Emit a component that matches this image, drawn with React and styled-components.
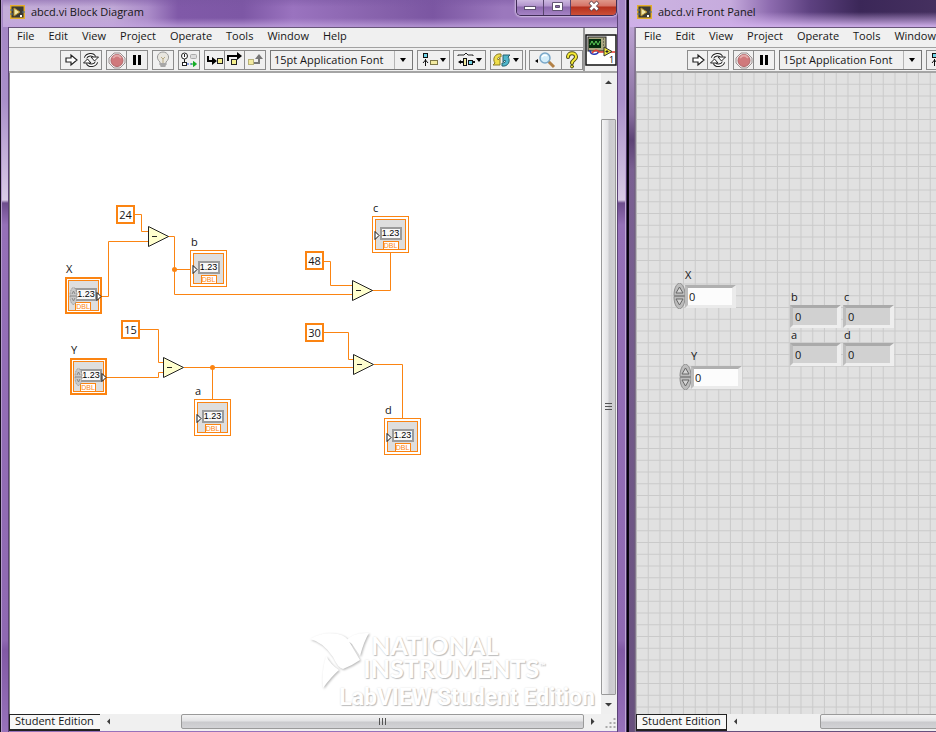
import React, { useId, useState } from "react";
import styled, { createGlobalStyle, css } from "styled-components";

const ORANGE = "#fb8412";

const GlobalStyle = createGlobalStyle`
  * { box-sizing: border-box; }
  body { margin: 0; overflow: hidden; }
  body, button, input, select {
    font-family: "Open Sans", "Noto Sans", sans-serif;
    font-size: 11px;
    color: #161616;
  }
  button { padding: 0; border: 0; background: none; }
`;

const Desktop = styled.main`
  display: grid;
  grid-template-columns: minmax(0, 628fr) minmax(0, 308fr);
  height: 100vh;
  min-height: 600px;
`;

const Frame = styled.section`
  display: grid;
  grid-template-rows: 27px minmax(0, 1fr);
  min-width: 0;
  min-height: 0;
  overflow: hidden;
  ${(p) =>
    p.$active
      ? css`
          padding: 0 10px 1px 9px;
          border-right: 1px solid #050208;
          background:
            linear-gradient(90deg, #140d1c 0 1px, #b39acb 1px 2px, transparent 2px 8px, #5b4276 8px 9px, transparent 9px calc(100% - 10px), #5b4276 calc(100% - 10px) calc(100% - 9px), transparent calc(100% - 9px) calc(100% - 2px), #c0a9d6 calc(100% - 2px) calc(100% - 1px), #4b3563 calc(100% - 1px)),
            linear-gradient(180deg, #a384c4 0, #a98fc9 100px, #d9cbe6 200px, #6d4d8c 203px, #9570b8 225px, #8f69b2 640px, #8159a5 650px, #9772bb 100%);
        `
      : css`
          padding: 0 0 1px 8px;
          background:
            linear-gradient(90deg, #0d0714 0 1px, transparent 1px 6px, #6e6079 7px, #9b90a6 8px, transparent 8px),
            linear-gradient(180deg, #cdb2e5 0, #a78fbd 60px, #856c9c 115px, #5d4375 140px, #7a6092 170px, #67507d 100%);
        `}
`;

const TitleBar = styled.header`
  display: flex;
  align-items: flex-start;
  gap: 6px;
  min-width: 0;
  margin-left: -6px;
  padding-left: 7px;
  background: ${(p) =>
    p.$active
      ? "linear-gradient(180deg, transparent 0 18px, rgba(194,163,222,.7) 26px), linear-gradient(180deg, rgba(120,85,160,.45), transparent 7px), linear-gradient(90deg, #c3acd8 0, #c0a8d6 110px, #ab8cc9 145px, #8059a8 175px, #7d57a5 240px, #9a73bf 290px, #8661ab 380px, #7b56a2 430px, #9b78bd 500px)"
      : "linear-gradient(180deg, transparent 0 12px, rgba(207,174,233,.95) 26px), linear-gradient(90deg, #cdb4e2 0, #c6abdd 100px, #8d6baf 140px, #5d4180 180px, #3b2758 230px, #45305f 100%)"};
`;

const Title = styled.h1`
  flex: 1;
  margin: 0;
  padding-top: 4px;
  font-size: 11px;
  font-weight: 400;
  line-height: 16px;
  white-space: nowrap;
`;

const AppMark = styled.svg`
  flex: none;
  width: 15px;
  height: 14px;
  margin-top: 5px;
`;

const CaptionButtons = styled.div`
  display: flex;
  height: 16px;
  border: 1px solid #3f2c55;
  border-top: 0;
  border-radius: 0 0 5px 5px;
  overflow: hidden;
  box-shadow: 0 0 2px 1px rgba(236, 224, 247, 0.7);
`;

const CaptionButton = styled.button`
  display: grid;
  place-items: center;
  width: ${(p) => (p.$close ? 45 : 27)}px;
  padding-bottom: 4px;
  border-right: ${(p) => (p.$close ? 0 : "1px solid #59456e")};
  background: ${(p) =>
    p.$close
      ? "linear-gradient(180deg, #df978a 0, #d57366 6px, #b5301d 7px, #cc4f38 100%)"
      : "linear-gradient(180deg, #cdb8e0 0, #b294cd 6px, #8d69ae 7px, #a583c5 100%)"};
  svg { width: 14px; height: 12px; }
`;

const Client = styled.div`
  display: grid;
  grid-template-rows: 46px minmax(0, 1fr) 17px;
  min-width: 0;
  min-height: 0;
  background: #f0f0f0;
`;

const Head = styled.div`
  display: flex;
  min-width: 0;
  border-top: 1px solid #685579;
  border-bottom: 2px solid #a5a5a5;
  overflow: hidden;
`;

const HeadBars = styled.div`
  flex: 1;
  min-width: 0;
  overflow: hidden;
`;

const MenuBar = styled.nav`
  display: flex;
  align-items: flex-start;
  gap: 14px;
  height: 20px;
  padding: 0 8px;
  border-bottom: 1px solid #a2a2a2;
`;

const MenuItem = styled.button`
  flex: none;
  height: 16px;
  line-height: 16px;
`;

const ToolBar = styled.div`
  display: flex;
  align-items: center;
  gap: 4px;
  height: 23px;
  padding-left: 51px;
  > * { flex: none; }
`;

const ToolGroup = styled.div`
  display: flex;
  border: 1px solid #8c8c8c;
`;

const ToolButton = styled.button`
  display: grid;
  place-items: center;
  width: ${(p) => (p.$wide ? 31 : 20)}px;
  height: 18px;
  &:not(:last-child) { border-right: 1px solid #8c8c8c; }
  svg { width: ${(p) => (p.$wide ? 29 : 18)}px; height: 18px; }
`;

const FontPicker = styled.label`
  display: flex;
  align-items: center;
  width: 143px;
  height: 20px;
  border: 1px solid #777;
  select {
    flex: 1;
    min-width: 0;
    height: 18px;
    padding: 0 0 1px 3px;
    border: 0;
    border-right: 1px solid #b5b5b5;
    margin-right: 5px;
    background: transparent;
    appearance: none;
  }
  svg { width: 6px; height: 4px; margin-right: 6px; }
`;

const Badge = styled.button`
  flex: none;
  display: grid;
  place-items: center;
  width: 34px;
  border-left: 2px solid #9a9a9a;
  svg { width: 32px; height: 32px; }
`;

const Body = styled.div`
  display: grid;
  grid-template-columns: minmax(0, 1fr) ${(p) => (p.$scroll ? "16px" : "")};
  min-height: 0;
`;

const Canvas = styled.div`
  position: relative;
  overflow: hidden;
  background: ${(p) => (p.$panel ? "#e1e1e1" : "#fff")};
  border-left: 1px solid ${(p) => (p.$panel ? "#b9b9b9" : "#888")};
`;

const Drawing = styled.svg`
  display: block;
  position: absolute;
  top: 0;
  left: 0;
  width: 100%;
  height: 100%;
`;

const Placed = styled.div`
  position: absolute;
  left: ${(p) => p.$x}px;
  top: ${(p) => p.$y}px;
`;

const NodeLabel = styled.span`
  display: block;
  height: 14px;
  padding-left: 1px;
  line-height: 12px;
`;

const Constant = styled.div`
  display: grid;
  place-items: center;
  width: 19px;
  height: 19px;
  border: 2px solid ${ORANGE};
  background: #fff;
  line-height: 14px;
`;

const TerminalBox = styled.div`
  position: relative;
  display: flex;
  flex-direction: column;
  align-items: center;
  width: 37px;
  height: 37px;
  padding: ${(p) => (p.$control ? 1 : 2)}px;
  border: ${(p) => (p.$control ? 2 : 1)}px solid ${ORANGE};
  background: #fff;
`;

const TerminalFace = styled.div`
  flex: 1;
  align-self: stretch;
  display: flex;
  flex-direction: column;
  align-items: ${(p) => (p.$control ? "flex-end" : "center")};
  justify-content: space-between;
  padding-top: 7px;
  padding-right: ${(p) => (p.$control ? 1 : 0)}px;
  border: 1px solid ${ORANGE};
  background: #dedede;
`;

const Readout = styled.span`
  display: flex;
  justify-content: center;
  width: 22px;
  height: 13px;
  border: 2px solid #9b9b9b;
  background: #f8f8f8;
  font: 9px/9px "Liberation Sans", sans-serif;
  color: #000;
`;

const TypeTag = styled.span`
  display: flex;
  justify-content: center;
  align-self: center;
  width: 16px;
  height: 8px;
  border: 1px solid ${ORANGE};
  border-bottom: 0;
  background: #fff;
  color: ${ORANGE};
  font: 7px/8px "Liberation Sans", sans-serif;
`;

const PortArrow = styled.svg`
  position: absolute;
  top: ${(p) => (p.$control ? 12 : 13)}px;
  left: ${(p) => (p.$control ? 29 : 1)}px;
  width: 6px;
  height: 11px;
`;

const MiniSpinner = styled.svg`
  position: absolute;
  top: 7px;
  left: 2px;
  width: 9px;
  height: 20px;
`;

const Numeric = styled.div`
  display: flex;
  flex-direction: column;
`;

const NumericLabel = styled.label`
  height: 15px;
  padding-left: ${(p) => (p.$inset ? 12 : 1)}px;
  line-height: 13px;
`;

const NumericRow = styled.div`
  display: flex;
  align-items: center;
`;

const Spinner = styled.button`
  display: block;
  width: 12px;
  height: 26px;
  svg { display: block; width: 13px; height: 26px; }
`;

const NumberBox = styled.input`
  width: 51px;
  height: 23px;
  padding: 0 ${(p) => (p.readOnly ? 2 : 1)}px;
  border: 3px solid;
  border-right-width: 4px;
  border-color: ${(p) => (p.readOnly ? "#aaa #eee #eee #bdbdbd" : "#b0b0b0 #ebebeb #ebebeb #bcbcbc")};
  background: ${(p) => (p.readOnly ? "#d1d1d1" : "#fcfcfc")};
  outline: 0;
`;

const Watermark = styled.div`
  position: absolute;
  right: 6px;
  bottom: 1px;
  display: grid;
  grid-template-columns: 54px auto;
  grid-template-rows: 23px 23px 33px;
  color: #fff;
  white-space: nowrap;
  text-shadow: 1px 1px 1px #bdbdbd, 0 0 2px #dcdcdc;
  sup { font-size: 8px; line-height: 0; vertical-align: 9px; }
`;

const EagleMark = styled.svg`
  grid-row: 1 / span 2;
  width: 62px;
  height: 60px;
  margin-top: -3px;
  filter: drop-shadow(1px 1px 1px #b5b5b5);
`;

const Brand = styled.strong`
  padding-left: ${(p) => (p.$indent ? 8 : 0)}px;
  font: 700 25px/23px Lato, sans-serif;
`;

const Product = styled.strong`
  grid-column: 1 / -1;
  padding-left: 30px;
  font: 700 23px/36px Roboto, sans-serif;
  text-align: right;
`;

const VScroll = styled.div`
  display: flex;
  flex-direction: column;
  align-items: flex-start;
  background: #efefef;
`;

const VThumb = styled.div`
  flex: 1;
  display: grid;
  place-items: center;
  width: 15px;
  margin: 27px 0 0;
  border: 1px solid #9a9a9a;
  border-radius: 1px;
  background: linear-gradient(90deg, #f4f4f4, #e3e3e5 45%, #cacacd 55%, #d0d0d3);
`;

const Foot = styled.div`
  display: flex;
  min-width: 0;
  background: #f0f0f0;
`;

const Edition = styled.div`
  flex: none;
  width: 91px;
  padding: 0 4px 0 5px;
  border: 1px solid #222;
  border-bottom-width: 2px;
  border-right-width: ${(p) => (p.$active ? 0 : 1)}px;
  background: #f7f7f7;
  line-height: 12px;
  white-space: nowrap;
`;

const ScrollButton = styled.button`
  flex: none;
  display: grid;
  place-items: center;
  width: ${(p) => (p.$vertical ? 15 : 17)}px;
  height: ${(p) => (p.$vertical ? 19 : 15)}px;
  svg { width: 7px; height: 7px; }
`;

const HThumb = styled.div`
  flex: 1;
  display: grid;
  place-items: center;
  height: 15px;
  margin-left: ${(p) => (p.$active ? 64 : 76)}px;
  margin-right: ${(p) => (p.$active ? 0 : -90)}px;
  border: 1px solid #9a9a9a;
  border-radius: 2px;
  background: linear-gradient(180deg, #f4f4f4, #e3e3e5 45%, #cacacd 55%, #d3d3d6);
`;

const Corner = styled.svg`
  width: 16px;
  height: 16px;
`;

const Ridge = styled.svg`
  width: 8px;
  height: 8px;
`;

function Ridges({ vertical }) {
  return (
    <Ridge viewBox="0 0 8 8" aria-hidden="true">
      <path
        d={vertical ? "M0 .5h7M0 3.5h7M0 6.5h7" : "M.5 0v7M3.5 0v7M6.5 0v7"}
        stroke="#555"
      />
    </Ridge>
  );
}

const ARROWS = {
  up: "M0 5L3.500 1.500L7 5z",
  down: "M0 2L3.500 5.500L7 2z",
  left: "M5 0.500L2 3.500L5 6.500z",
  right: "M2 0L5.500 3.500L2 7z",
};

function Scroll({ dir }) {
  return (
    <ScrollButton $vertical={dir === "up" || dir === "down"} aria-label={`Scroll ${dir}`}>
      <svg viewBox="0 0 7 7"><path d={ARROWS[dir]} fill="#3c3c3c" /></svg>
    </ScrollButton>
  );
}

const ICONS = {
  run: <path d="M4 7h5V4l6 5-6 5v-3H4z" fill="#fff" stroke="#222" strokeWidth="1.200" />,
  loop: (
    <g fill="none">
      <path d="M3.500 7C5 3 11 2.500 12.500 6M14.500 11C13 15 7 15.500 5.500 12" stroke="#222" strokeWidth="3.500" />
      <path d="M3.500 7C5 3 11 2.500 12.500 6M14.500 11C13 15 7 15.500 5.500 12" stroke="#fff" strokeWidth="1.500" />
      <path d="M9 6h7.500l-4 4zM1.500 12H9L5.500 8z" fill="#fff" stroke="#222" />
    </g>
  ),
  abort: (
    <g>
      <path d="M6 2h6l5 5v5l-5 5H6l-5-5V7z" fill="#eee" stroke="#9b8f8f" />
      <circle cx="9" cy="9.500" r="6" fill="#d0797c" stroke="#b16568" />
      <path d="M5 7q4-5 8 0" fill="none" stroke="#e5aaaa" strokeWidth="2" />
    </g>
  ),
  pause: <path d="M5 4h3v10H5zM10 4h3v10h-3z" />,
  bulb: (
    <g stroke="#999" fill="#e8e6df">
      <path d="M6 11C1 7 4 1 9 1s8 6 3 10v3H6z" />
      <path d="M7 6l2 2 2-2M9 8v4" fill="none" stroke="#b8a982" />
      <path d="M6 13h6M6.500 15h5" strokeWidth="2" stroke="#a7a7a7" />
    </g>
  ),
  retain: (
    <g fill="none" stroke="#222">
      <circle cx="4.500" cy="5" r="3" fill="#fff" /><path d="M4.500 3v3M4.500 8v3" />
      <rect x="10.500" y="3.500" width="6" height="4" rx="1" stroke="#aaa" fill="#ddd" />
      <rect x="2.500" y="11.500" width="4" height="3" fill="#fff" />
      <path d="M7 13h5" stroke="#2b57d5" strokeDasharray="2 1" />
      <path d="M11 13h4M13.500 10.500l3 2.500-3 2.500z" stroke="#12ad25" fill="#12ad25" />
    </g>
  ),
  into: (
    <g><path d="M2 5v5h5" fill="none" stroke="#000" strokeWidth="2" /><path d="M6 6l5 4-5 4z" /><rect x="11.500" y="7.500" width="5" height="5" fill="#f4ee8c" stroke="#222" /></g>
  ),
  over: (
    <g><path d="M2 10V5h9" fill="none" stroke="#000" strokeWidth="2" /><path d="M11 1l5 4-5 4z" /><rect x="5.500" y="8.500" width="5" height="5" fill="#f4ee8c" stroke="#222" /></g>
  ),
  out: (
    <g><rect x="2.500" y="8.500" width="5" height="5" fill="#f2eaa0" stroke="#b8b279" /><path d="M8 12h5V7" fill="none" stroke="#777" strokeWidth="2" /><path d="M9 8l4-5 4 5z" fill="#777" /></g>
  ),
  align: (
    <g><rect x="4.500" y="2.500" width="4" height="4" fill="#6fd3e6" stroke="#111" /><path d="M6.500 8v7M4 12l2.500-3 2.500 3" fill="none" stroke="#111" /><rect x="11.500" y="9.500" width="7" height="4" fill="#f2eaa0" stroke="#7d7747" /><path d="M21 7h6l-3 4z" /></g>
  ),
  distribute: (
    <g><path d="M3 5v-1h6l2-2 2 2h5v1" fill="none" stroke="#222" /><path d="M3 11l3-2v4z" /><path d="M6 11h2M17 11h3" stroke="#111" strokeWidth="2" /><rect x="8.500" y="7.500" width="3" height="7" fill="#f2eaa0" stroke="#111" /><rect x="13.500" y="9.500" width="4" height="4" fill="#6fd3e6" stroke="#111" /><path d="M21 7h6l-3 4z" /></g>
  ),
  reorder: (
    <g><path d="M9 3C3 2 0 8 3 12l-2 2h7V7L6 9C5 7 6 6 9 6z" fill="#f0df4b" stroke="#8a7b23" /><path d="M10 15c6 1 9-5 6-9l2-2h-7v7l2-2c1 2 0 3-3 3z" fill="#4fb6cb" stroke="#24606e" /><path d="M21 7h6l-3 4z" /></g>
  ),
  search: (
    <g><path d="M4 10l3-2v4z" /><path d="M17 10l6 6" stroke="#b38146" strokeWidth="3" /><circle cx="14" cy="7" r="5" fill="#d3edfa" stroke="#7aa7c8" strokeWidth="1.500" /><path d="M11 6q2-3 5-1" fill="none" stroke="#fff" strokeWidth="1.500" /></g>
  ),
  help: (
    <g fill="none" strokeLinecap="round"><path d="M5 6c0-5 8-5 8 0 0 3-4 3-4 6" stroke="#4d4a13" strokeWidth="4" /><path d="M5 6c0-5 8-5 8 0 0 3-4 3-4 6" stroke="#f7ec38" strokeWidth="2" /><circle cx="9" cy="15.500" r="1.500" fill="#f7ec38" stroke="#4d4a13" /></g>
  ),
};

function Tool({ icon, label, wide }) {
  return (
    <ToolButton $wide={wide} aria-label={label} title={label}>
      <svg viewBox={wide ? "0 0 29 18" : "0 0 18 18"}>{ICONS[icon]}</svg>
    </ToolButton>
  );
}

const EditTools = styled.div`
  display: flex;
  gap: 3px;
`;

const SearchTools = styled.div`
  display: flex;
  margin-left: -2px;
  padding-left: 3px;
  border-left: 1px solid #8c8c8c;
  > :last-child { margin-left: -1px; }
`;

function Tools({ active }) {
  return (
    <ToolBar role="toolbar">
      <ToolGroup><Tool icon="run" label="Run" /><Tool icon="loop" label="Run Continuously" /></ToolGroup>
      <ToolGroup><Tool icon="abort" label="Abort Execution" /><Tool icon="pause" label="Pause" /></ToolGroup>
      {active && (
        <>
          <ToolGroup><Tool icon="bulb" label="Highlight Execution" /></ToolGroup>
          <ToolGroup><Tool icon="retain" label="Retain Wire Values" /></ToolGroup>
          <ToolGroup><Tool icon="into" label="Step Into" /><Tool icon="over" label="Step Over" /><Tool icon="out" label="Step Out" /></ToolGroup>
        </>
      )}
      <FontPicker>
        <select aria-label="Text settings"><option>15pt Application Font</option></select>
        <svg viewBox="0 0 6 4"><path d="M0 0h6L3 4z" /></svg>
      </FontPicker>
      <EditTools>
        <ToolGroup><Tool wide icon="align" label="Align Objects" /></ToolGroup>
        <ToolGroup><Tool wide icon="distribute" label="Distribute Objects" /></ToolGroup>
      </EditTools>
      {active && (
        <>
          <ToolGroup><Tool wide icon="reorder" label="Reorder" /></ToolGroup>
          <SearchTools>
            <ToolGroup><Tool wide icon="search" label="Search" /></ToolGroup>
            <ToolGroup><Tool icon="help" label="Context Help" /></ToolGroup>
          </SearchTools>
        </>
      )}
    </ToolBar>
  );
}

const MENUS = ["File", "Edit", "View", "Project", "Operate", "Tools", "Window", "Help"];

function ViBadge() {
  return (
    <Badge aria-label="VI icon">
      <svg viewBox="0 0 32 32">
        <rect x="1" y="1" width="30" height="30" fill="#fff" stroke="#111" strokeWidth="1.500" />
        <rect x="3" y="3" width="18" height="14" fill="#aba982" stroke="#222" />
        <rect x="4" y="5" width="12" height="9" fill="#042d0d" />
        <path d="M5 11l2-4 2 4 2-4 2 4 2-4" fill="none" stroke="#5fd45b" />
        <path d="M18 5h2M18 8h2M18 11h2" stroke="#333" strokeDasharray="1 1" />
        <path d="M5 16c0 5 7 6 9 1" fill="none" stroke="#273ab5" strokeWidth="1.500" />
        <path d="M7 19q4-5 7-1h6M25 18h5" fill="none" stroke="#e33a2d" strokeWidth="1.500" />
        <path d="M19 13v9l8-4.500z" fill="#f3ec36" stroke="#333" />
        <path d="M20.500 17.500h3M22 16v3" stroke="#222" />
        <text x="24" y="29" fontFamily="Open Sans, sans-serif" fontSize="9">1</text>
      </svg>
    </Badge>
  );
}

function ViWindow({ title, active, children }) {
  return (
    <Frame $active={active} aria-label={title}>
      <TitleBar $active={active}>
        <AppMark viewBox="0 0 15 14" aria-hidden="true">
          <rect x=".7" y=".7" width="13.600" height="12.600" fill="#3d3b33" stroke="#e5ae2c" strokeWidth="1.500" />
          <path d="M0 5h3M0 9h3M12 7h3" stroke="#4a6f91" />
          <path d="M4 3v8l6-4z" fill="#efe6a9" stroke="#b28b25" />
          <path d="M10 11h2" stroke="#fff" strokeWidth="2" />
        </AppMark>
        <Title>{title}</Title>
        {active && (
          <CaptionButtons>
            <CaptionButton aria-label="Minimize">
              <svg viewBox="0 0 14 12"><rect x="1.500" y="6.500" width="11" height="3" fill="#fff" stroke="#5f5272" /></svg>
            </CaptionButton>
            <CaptionButton aria-label="Maximize">
              <svg viewBox="0 0 14 12"><path d="M2.500 2.500h10v8h-10z" fill="#fff" stroke="#5f5272" /><path d="M5.500 5.500h4v2h-4z" fill="#8b6aab" stroke="#5f5272" /></svg>
            </CaptionButton>
            <CaptionButton $close aria-label="Close">
              <svg viewBox="0 0 14 12"><path d="M3 2l8 8M11 2l-8 8" stroke="#65444d" strokeWidth="4" /><path d="M3.500 2.500l7 7M10.500 2.500l-7 7" stroke="#fff" strokeWidth="2.500" /></svg>
            </CaptionButton>
          </CaptionButtons>
        )}
      </TitleBar>
      <Client>
        <Head>
          <HeadBars>
            <MenuBar>{MENUS.slice(0, active ? 8 : 7).map((m) => <MenuItem key={m}>{m}</MenuItem>)}</MenuBar>
            <Tools active={active} />
          </HeadBars>
          {active && <ViBadge />}
        </Head>
        <Body $scroll={active}>
          {children}
          {active && (
            <VScroll><Scroll dir="up" /><VThumb><Ridges vertical /></VThumb><Scroll dir="down" /></VScroll>
          )}
        </Body>
        <Foot>
          <Edition $active={active}>Student Edition</Edition>
          <Scroll dir="left" />
          <HThumb $active={active}>{active && <Ridges />}</HThumb>
          {active && (
            <>
              <Scroll dir="right" />
              <Corner viewBox="0 0 15 16"><path d="M12 5h2M8 9h2M12 9h2M4 13h2M8 13h2M12 13h2" stroke="#aaa" strokeWidth="2" /></Corner>
            </>
          )}
        </Foot>
      </Client>
    </Frame>
  );
}

function Terminal({ x, y, name, control }) {
  return (
    <Placed $x={x} $y={y}>
      <NodeLabel>{name}</NodeLabel>
      <TerminalBox $control={control}>
        <TerminalFace $control={control}>
          <Readout>1.23</Readout>
          <TypeTag>DBL</TypeTag>
        </TerminalFace>
        <PortArrow $control={control} viewBox="0 0 6 11"><path d="M1 1.500v8l4-4z" fill="#fff" stroke="#111" /></PortArrow>
        {control && (
          <MiniSpinner viewBox="0 0 9 20">
            <ellipse cx="4.500" cy="10" rx="3.500" ry="8.500" fill="#c9c9c9" stroke="#999" strokeDasharray="2 1" />
            <path d="M3 8l1.500-3L6 8M3 12l1.500 3L6 12M1 10h7" fill="none" stroke="#888" />
          </MiniSpinner>
        )}
      </TerminalBox>
    </Placed>
  );
}

const WIRES = [
  "M124 141.500h7.500v17h7",
  "M91 223.500h7.500v-55h40",
  "M158 163.500h6.500v58h178M164.500 196.500h16",
  "M129 256.500h19.500v33h6",
  "M97 304.500h51.500v-5h6",
  "M174 294.500h170M202.500 294.500v33",
  "M314 188.500h6.500v24h22",
  "M362 217.500h18.500v-38",
  "M314 259.500h24.500v27h6",
  "M364 291.500h28.500v54",
];

const SUBTRACTS = [[138, 153], [153, 284], [342, 207], [343, 281]];
const CONSTANTS = [[106, 132, 24], [111, 247, 15], [295, 178, 48], [295, 250, 30]];
const TERMINALS = [
  { name: "X", x: 55, y: 190, control: true },
  { name: "Y", x: 60, y: 271, control: true },
  { name: "b", x: 180, y: 163 },
  { name: "a", x: 184, y: 312 },
  { name: "c", x: 362, y: 129 },
  { name: "d", x: 374, y: 331 },
];

function BlockDiagram() {
  return (
    <Canvas>
      <Drawing aria-label="Wires">
        <g fill="none" stroke={ORANGE}>{WIRES.map((d) => <path key={d} d={d} />)}</g>
        <circle cx="164.500" cy="196.500" r="2.500" fill={ORANGE} />
        <circle cx="202.500" cy="294.500" r="2.500" fill={ORANGE} />
        {SUBTRACTS.map(([x, y]) => (
          <g key={`${x}-${y}`} transform={`translate(${x} ${y})`} stroke="#222">
            <path d="M.5 .5v20l20-10z" fill="#ffffce" />
            <path d="M4 10.500h5" />
          </g>
        ))}
      </Drawing>
      {CONSTANTS.map(([x, y, v]) => (
        <Placed key={v} $x={x} $y={y}><Constant>{v}</Constant></Placed>
      ))}
      {TERMINALS.map((t) => <Terminal key={t.name} {...t} />)}
      <Watermark>
        <EagleMark viewBox="0 0 62 60" aria-hidden="true">
          <path d="M1 8Q14 0 29 3Q38 5 41 12L51 29Q44 34 34 38Q29 37 24 26Q14 11 1 8z" fill="#fff" />
          <path d="M36 11Q43 1 60 2Q55 10 51 25L43 13Q39 9 36 11z" fill="#fff" />
          <path d="M17 25Q22 34 30 39Q22 46 14 57Q12 43 17 25z" fill="#fff" />
        </EagleMark>
        <Brand $indent>NATIONAL</Brand>
        <Brand>INSTRUMENTS<sup>™</sup></Brand>
        <Product>LabVIEW<sup>™</sup>Student Edition</Product>
      </Watermark>
    </Canvas>
  );
}

function NumericField({ x, y, name, indicator }) {
  const id = useId();
  const [value, setValue] = useState("0");
  return (
    <Placed $x={x} $y={y}>
      <Numeric>
        <NumericLabel htmlFor={id} $inset={!indicator}>{name}</NumericLabel>
        <NumericRow>
          {!indicator && (
            <Spinner aria-label={`Increment ${name}`} onClick={() => setValue(String(Number(value) + 1))}>
              <svg viewBox="0 0 13 26">
                <path d="M6.500 0C3 1 1 6 1 12.500h11C12 6 10 1 6.500 0z" fill="#bcbcbc" stroke="#8c8c8c" />
                <path d="M6.500 26C3 25 1 20 1 13.500h11C12 20 10 25 6.500 26z" fill="#bcbcbc" stroke="#8c8c8c" />
                <path d="M3 10l3.500-6L10 10zM3 16h7l-3.500 6z" fill="#d4d4d4" stroke="#666" />
              </svg>
            </Spinner>
          )}
          <NumberBox id={id} value={value} readOnly={indicator} onChange={(e) => setValue(e.target.value)} />
        </NumericRow>
      </Numeric>
    </Placed>
  );
}

const FIELDS = [
  { name: "X", x: 36, y: 195 },
  { name: "Y", x: 42, y: 276 },
  { name: "b", x: 153, y: 217, indicator: true },
  { name: "c", x: 206, y: 217, indicator: true },
  { name: "a", x: 153, y: 255, indicator: true },
  { name: "d", x: 206, y: 255, indicator: true },
];

function FrontPanel() {
  return (
    <Canvas $panel>
      <Drawing aria-hidden="true">
        <defs>
          <pattern id="panel-grid" width="11.750" height="11.750" patternUnits="userSpaceOnUse">
            <path d="M11.200 0V11.750M0 11.200H11.750" stroke="#cacaca" />
          </pattern>
        </defs>
        <rect width="100%" height="100%" fill="url(#panel-grid)" />
      </Drawing>
      {FIELDS.map((f) => <NumericField key={f.name} {...f} />)}
    </Canvas>
  );
}

export default function App() {
  return (
    <>
      <GlobalStyle />
      <Desktop>
        <ViWindow active title="abcd.vi Block Diagram"><BlockDiagram /></ViWindow>
        <ViWindow title="abcd.vi Front Panel"><FrontPanel /></ViWindow>
      </Desktop>
    </>
  );
}
